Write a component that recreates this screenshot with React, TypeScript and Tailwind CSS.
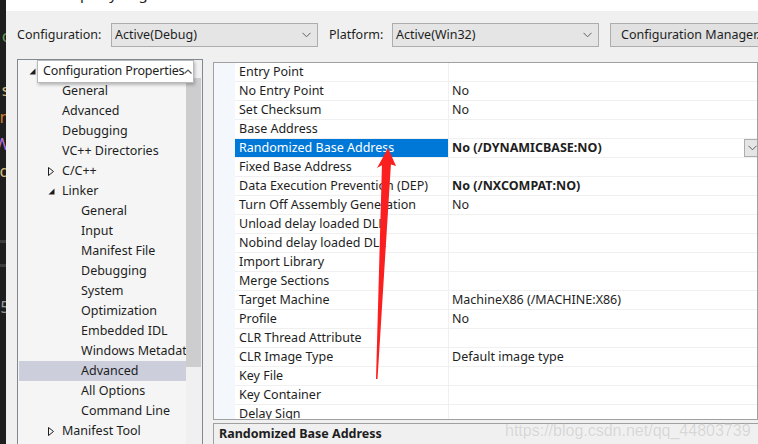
import React from "react";

const FONT = "font-['Noto_Sans',sans-serif]";

type TreeItem = { label: string; level: 0 | 1 | 2; toggle?: "open" | "closed"; selected?: boolean };

const TREE: TreeItem[] = [
  { label: "General", level: 1 },
  { label: "Advanced", level: 1 },
  { label: "Debugging", level: 1 },
  { label: "VC++ Directories", level: 1 },
  { label: "C/C++", level: 1, toggle: "closed" },
  { label: "Linker", level: 1, toggle: "open" },
  { label: "General", level: 2 },
  { label: "Input", level: 2 },
  { label: "Manifest File", level: 2 },
  { label: "Debugging", level: 2 },
  { label: "System", level: 2 },
  { label: "Optimization", level: 2 },
  { label: "Embedded IDL", level: 2 },
  { label: "Windows Metadata", level: 2 },
  { label: "Advanced", level: 2, selected: true },
  { label: "All Options", level: 2 },
  { label: "Command Line", level: 2 },
  { label: "Manifest Tool", level: 1, toggle: "closed" },
];

type Prop = { name: string; value?: string; bold?: boolean; selected?: boolean };

const PROPS: Prop[] = [
  { name: "Entry Point" },
  { name: "No Entry Point", value: "No" },
  { name: "Set Checksum", value: "No" },
  { name: "Base Address" },
  { name: "Randomized Base Address", value: "No (/DYNAMICBASE:NO)", bold: true, selected: true },
  { name: "Fixed Base Address" },
  { name: "Data Execution Prevention (DEP)", value: "No (/NXCOMPAT:NO)", bold: true },
  { name: "Turn Off Assembly Generation", value: "No" },
  { name: "Unload delay loaded DLL" },
  { name: "Nobind delay loaded DLL" },
  { name: "Import Library" },
  { name: "Merge Sections" },
  { name: "Target Machine", value: "MachineX86 (/MACHINE:X86)" },
  { name: "Profile", value: "No" },
  { name: "CLR Thread Attribute" },
  { name: "CLR Image Type", value: "Default image type" },
  { name: "Key File" },
  { name: "Key Container" },
  { name: "Delay Sign" },
];

function Chevron({ className }: { className?: string }) {
  return (
    <svg width="9" height="6" viewBox="0 0 9 6" className={className}>
      <path d="M0.5 0.8 L4.5 4.8 L8.5 0.8" fill="none" stroke="#606060" strokeWidth="1" />
    </svg>
  );
}

function Combo({ text, width }: { text: string; width: string }) {
  return (
    <div className={`${width} shrink-0 h-[24px] flex items-center justify-between bg-[#e5e5e5] border border-[#adadad] pl-[3px] pr-[6px]`}>
      <span>{text}</span>
      <Chevron />
    </div>
  );
}

function Triangle({ kind }: { kind: "open" | "closed" }) {
  if (kind === "open") {
    return (
      <svg width="7" height="7" viewBox="0 0 7 7">
        <path d="M6.5 0.5 L6.5 6.5 L0.5 6.5 Z" fill="#1e1e1e" />
      </svg>
    );
  }
  return (
    <svg width="6" height="9" viewBox="0 0 6 9">
      <path d="M0.5 0.5 L5.5 4.5 L0.5 8.5 Z" fill="none" stroke="#1e1e1e" strokeWidth="1" />
    </svg>
  );
}

function Tree() {
  return (
    <div className="relative w-[186px] h-[386px] shrink-0 border border-[#828790] bg-[#f5f5f5] flex overflow-hidden">
      <div className="flex-1 flex flex-col pt-[21px] overflow-hidden">
        {TREE.map((t, i) => (
          <div
            key={i}
            className={`h-[20px] shrink-0 flex items-center whitespace-nowrap ${t.selected ? "bg-[#cccedb] ml-[1px] pl-[62px]" : ""} ${
              t.level === 1 ? "pl-[44px]" : t.level === 2 && !t.selected ? "pl-[63px]" : ""
            }`}
          >
            {t.toggle ? (
              <span className="-ml-[14px] w-[14px] flex items-center">
                <Triangle kind={t.toggle} />
              </span>
            ) : null}
            <span>{t.label}</span>
          </div>
        ))}
      </div>
      {/* scrollbar */}
      <div className="w-[16px] shrink-0 bg-[#f0f0f0] flex flex-col">
        <div className="h-[18px]" />
        <div className="h-[289px] w-[15px] bg-[#cdcdcd]" />
      </div>
      {/* sticky header */}
      <div className="absolute left-[19px] top-0 w-[157px] h-[23px] bg-white border border-[#b9b9b9] shadow-[1px_2px_3px_rgba(0,0,0,0.25)] flex items-center pl-[5px] whitespace-nowrap">
        <span className="tracking-[-0.15px]">Configuration Properties</span>
        <svg className="absolute right-[1px] top-[8px]" width="8" height="5" viewBox="0 0 8 5">
          <path d="M0.5 4.5 L4 1 L7.5 4.5" fill="none" stroke="#555" strokeWidth="1.2" />
        </svg>
      </div>
      <span className="absolute left-[11px] top-[8px]">
        <Triangle kind="open" />
      </span>
    </div>
  );
}

function Grid() {
  return (
    <div className="h-[358px] border border-[#a0a0a0] bg-white flex overflow-hidden">
      <div className="w-[21px] shrink-0 bg-[#f4f7fc]" />
      <div className="flex-1 flex flex-col">
        {PROPS.map((p, i) => (
          <div key={i} className="h-[19px] shrink-0 flex border-b border-[#f0f0f0]">
            <div
              className={`w-[214px] shrink-0 pl-[4px] pt-[1px] flex items-center whitespace-nowrap overflow-hidden border-r border-[#f0f0f0] ${
                p.selected ? "bg-[#0078d7] text-white" : ""
              }`}
            >
              {p.name}
            </div>
            <div className={`flex-1 pl-[3px] flex items-center justify-between whitespace-nowrap ${p.bold ? "font-bold" : ""}`}>
              <span className="pt-[1px]">{p.value ?? ""}</span>
              {p.selected ? (
                <div className="w-[16px] h-[18px] mr-[-3px] bg-[#e5e5e5] border border-[#adadad] flex items-center justify-center">
                  <Chevron />
                </div>
              ) : null}
            </div>
          </div>
        ))}
      </div>
    </div>
  );
}

const CODE_BITS: { c: string; color: string }[] = [
  { c: "c", color: "text-[#6a9955]" },
  { c: ":", color: "text-[#c8c8c8]" },
  { c: "s", color: "text-[#d7ba7d]" },
  { c: "n", color: "text-[#ce7a2c]" },
  { c: "W", color: "text-[#b472d8]" },
  { c: "d", color: "text-[#d7ba7d]" },
];

export default function App() {
  return (
    <div className={`relative w-[758px] h-[444px] overflow-hidden flex text-[12.5px] text-[#1e1e1e] ${FONT}`}>
      {/* editor behind the dialog */}
      <div className="w-[6px] shrink-0 bg-[#1e1e1e] flex flex-col overflow-hidden pt-[22px]">
        {CODE_BITS.map((b, i) => (
          <div key={i} className={`h-[27px] shrink-0 w-[6px] overflow-hidden flex items-center justify-end text-[17px] leading-[27px] ${b.color}`}>
            <span className="-mr-[4px]">{b.c}</span>
          </div>
        ))}
        <div className="mt-[56px] h-[3px] w-[6px] bg-[#3c3c3c]" />
        <div className="mt-[21px] h-[3px] w-[6px] bg-[#3c3c3c]" />
        <div className="mt-[30px] h-[20px] w-[6px] overflow-hidden flex justify-end text-[17px] leading-[20px] text-[#9a9a9a]">
          <span className="-mr-[4px]">5</span>
        </div>
      </div>

      <div className="flex-1 flex flex-col bg-[#f0f0f0] min-w-0">
        {/* title bar (mostly cut off) */}
        <div className="h-[11px] bg-white overflow-hidden pl-[50px]">
          <div className="-mt-[17px] text-[15px] leading-[20px] text-[#222] whitespace-nowrap">Property Pages</div>
        </div>

        {/* configuration row */}
        <div className="mt-[12px] h-[24px] flex items-center whitespace-nowrap">
          <span className="ml-[11px] w-[94px] shrink-0">Configuration:</span>
          <Combo text="Active(Debug)" width="w-[207px]" />
          <span className="ml-[11px] w-[63px] shrink-0">Platform:</span>
          <Combo text="Active(Win32)" width="w-[207px]" />
          <div className="ml-[11px] h-[24px] w-[160px] shrink-0 bg-[#e1e1e1] border border-[#adadad] pl-[10px] flex items-center">
            Configuration Manager...
          </div>
        </div>

        {/* body */}
        <div className="mt-[12px] flex flex-1 min-h-0">
          <div className="ml-[11px]">
            <Tree />
          </div>
          <div className="ml-[10px] flex-1 flex flex-col pt-[3px] min-w-0">
            <Grid />
            <div className="mt-[3px] flex-1 border-t border-l border-[#a0a0a0] bg-[#f0f0f0] pl-[5px] pt-[1px] font-bold">
              Randomized Base Address
            </div>
          </div>
        </div>
      </div>

      {/* watermark */}
      <div className="absolute left-[505px] top-[421px] text-[16px] leading-[20px] font-['Liberation_Sans',sans-serif] text-[#d6d6d6] [text-shadow:0_0_1px_#ffffff] whitespace-nowrap">
        https://blog.csdn.net/qq_44803739
      </div>

      {/* red annotation arrow */}
      <svg className="absolute left-0 top-0 pointer-events-none" width="758" height="444">
        <polygon points="382,163 391,163 377.5,379 376,379" fill="#fb1f1f" />
        <polygon points="388,148 377,168 386,163 396,166" fill="#fb1f1f" />
      </svg>
    </div>
  );
}
